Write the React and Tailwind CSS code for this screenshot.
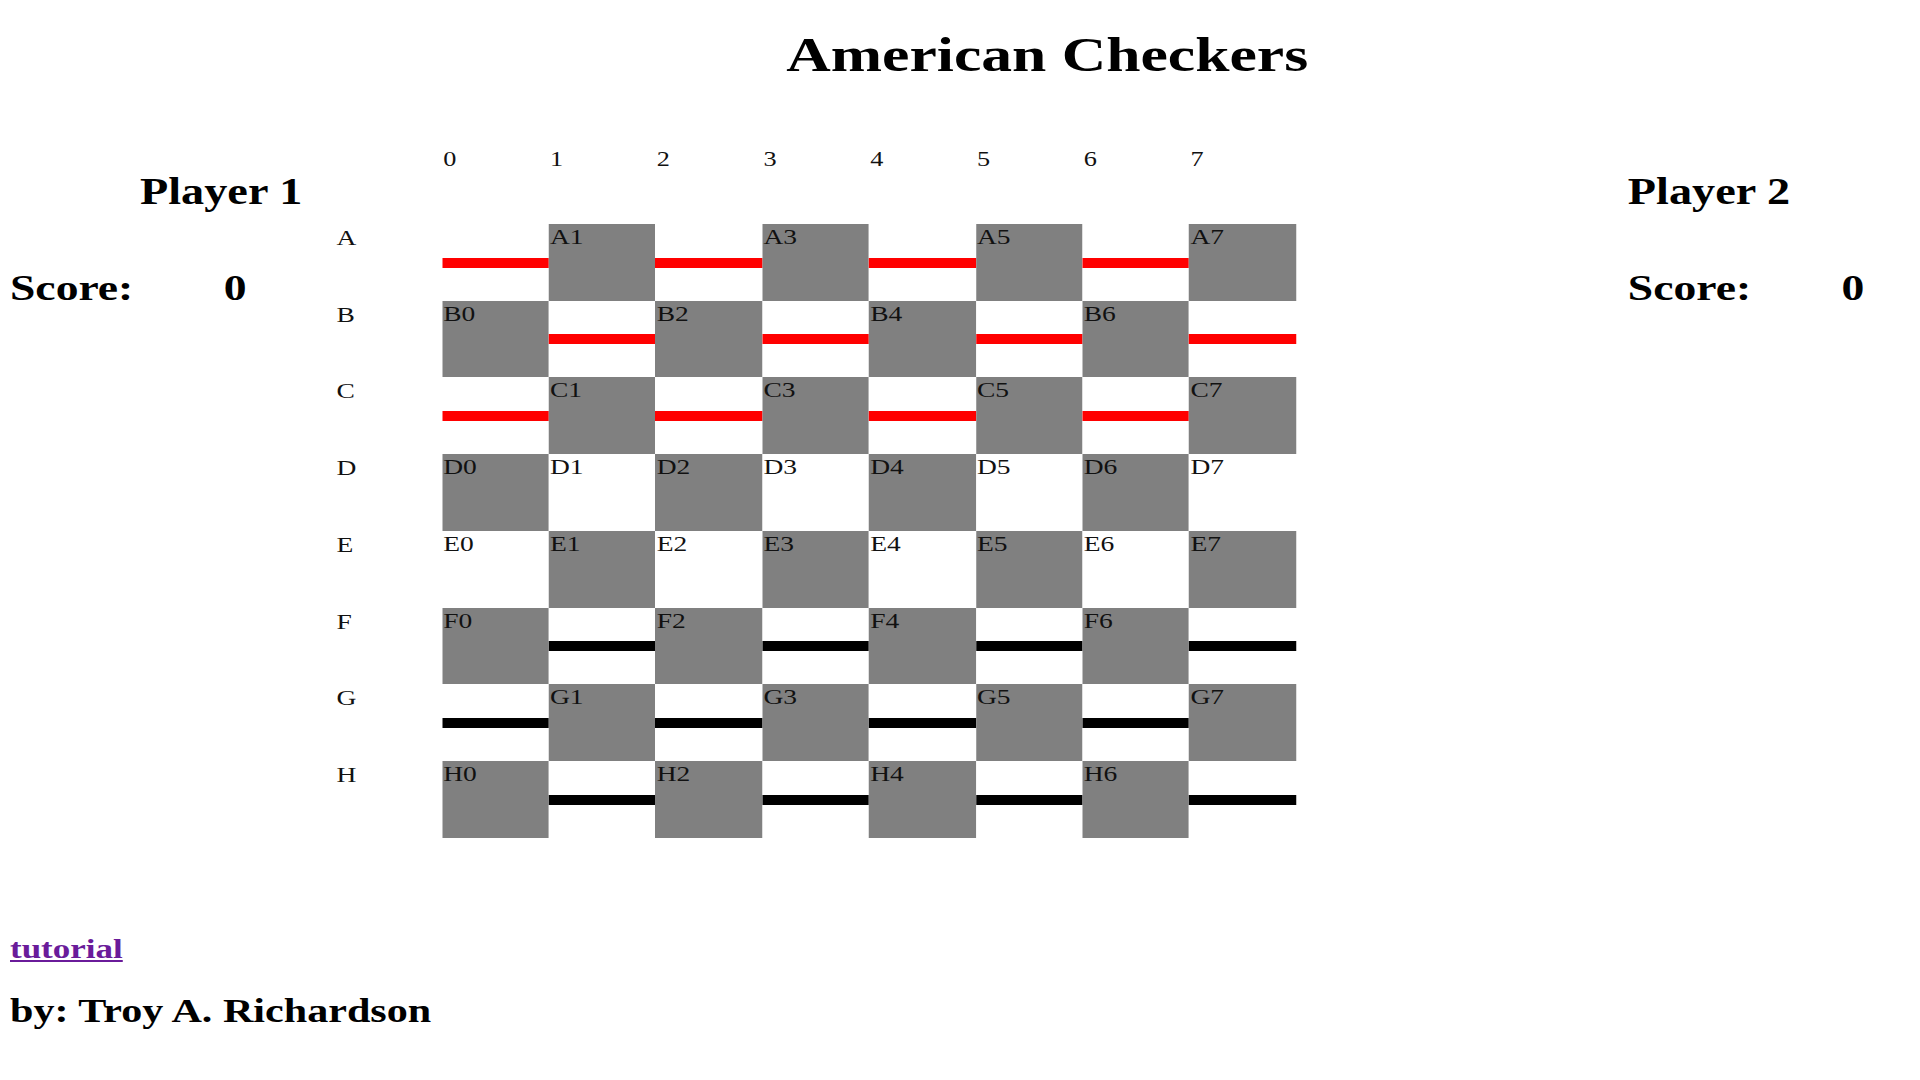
import React from 'react';

const rows = ['A', 'B', 'C', 'D', 'E', 'F', 'G', 'H'];
const cols = [0, 1, 2, 3, 4, 5, 6, 7];

function Square({ r, c }) {
  const dark = (r + c) % 2 === 1;
  // pieces sit on the light squares of the first and last three rows
  const piece = !dark && r < 3 ? 'red' : !dark && r > 4 ? 'black' : null;

  if (piece) {
    return (
      <div className="flex items-center pt-px bg-white">
        <div className={piece === 'red' ? 'h-[10px] w-full bg-[#ff0000]' : 'h-[10px] w-full bg-black'} />
      </div>
    );
  }

  return (
    <div className={dark ? 'bg-[#808080] pl-px pt-px text-[22px] leading-[23px] text-[#111]' : 'bg-white pl-px pt-px text-[22px] leading-[23px] text-[#111]'}>
      {rows[r]}
      {c}
    </div>
  );
}

function Player({ name, score, nameOffset }) {
  return (
    <div className="flex flex-col">
      <div className={nameOffset + ' mt-[25px] text-[37px] leading-[40px] font-bold'}>{name}</div>
      <div className="mt-[56px] flex text-[36.5px] leading-[40px] font-bold">
        <span className="w-[171px]">Score:</span>
        <span>{score}</span>
      </div>
    </div>
  );
}

export default function App() {
  return (
    <div className="w-[1920px] h-[1080px] overflow-hidden bg-white text-black">
      {/* page is laid out at 1536px and stretched sideways like the capture */}
      <div className="w-[1536px] origin-top-left scale-x-[1.25] font-['Liberation_Serif',serif]">
        {/* Title */}
        <h1 className="pt-[27px] pl-[629px] text-[49.3px] leading-[56px] font-bold">American Checkers</h1>

        {/* Players + board */}
        <div className="mt-[64px] flex">
          <div className="w-[268.2px] pl-[8px]">
            <Player name="Player 1" score="0" nameOffset="pl-[104px]" />
          </div>

          <div className="grid grid-cols-[repeat(9,85.4px)] auto-rows-[76.75px]">
            <div />
            {cols.map((c) => (
              <div key={'h' + c} className="pl-px pt-px text-[21px] leading-[23px] text-[#111]">
                {c}
              </div>
            ))}
            {rows.map((label, r) => (
              <React.Fragment key={label}>
                <div className="pl-px pt-[2px] text-[22px] leading-[23px] text-[#111]">{label}</div>
                {cols.map((c) => (
                  <Square key={label + c} r={r} c={c} />
                ))}
              </React.Fragment>
            ))}
          </div>

          <div className="ml-[265.6px]">
            <Player name="Player 2" score="0" nameOffset="pl-0" />
          </div>
        </div>

        {/* Footer */}
        <div className="pl-[8px]">
          <a href="#" className="mt-[95px] block w-fit text-[28px] leading-[32px] font-bold text-[#6a1b9a] underline">
            tutorial
          </a>
          <div className="mt-[27px] text-[33.7px] leading-[38px] font-bold">by: Troy A. Richardson</div>
        </div>
      </div>
    </div>
  );
}
